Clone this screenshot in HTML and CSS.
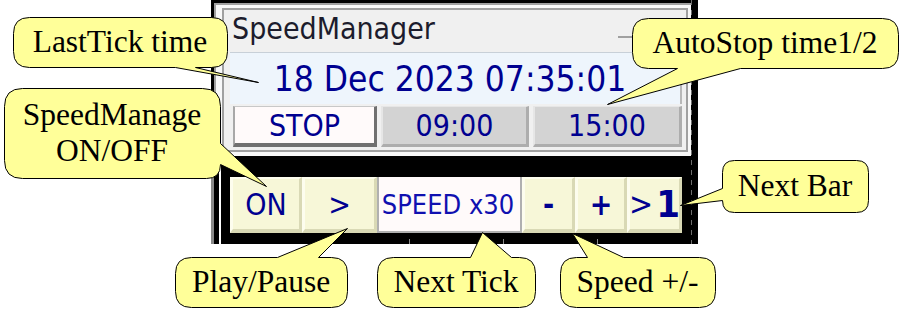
FILE: index.html
```html
<!DOCTYPE html>
<html>
<head>
<meta charset="utf-8">
<link rel="stylesheet" href="styles.css">
</head>
<body>
<div class="stage">
  <div class="chart">
    <div class="panel">
      <div class="panel-inner">
        <div class="title-row"><span class="title">SpeedManager</span><span class="min"></span></div>
        <div class="date">18 Dec 2023 07:35:01</div>
        <div class="boxes">
          <div class="box stop">STOP</div>
          <div class="box time t1">09:00</div>
          <div class="box time t2">15:00</div>
        </div>
      </div>
    </div>
    <div class="controls">
      <div class="row">
        <div class="btn b-on">ON</div>
        <div class="btn b-play">&gt;</div>
        <div class="speed">SPEED x30</div>
        <div class="btn b-minus">-</div>
        <div class="btn b-plus">+</div>
        <div class="btn b-next"><span class="gt">&gt;</span><span class="one">1</span></div>
      </div>
    </div>
  </div>

  <svg class="shapes" width="903" height="313" viewBox="0 0 903 313">
    <path d="M29.5,17.5 H211.5 Q227.5,17.5 227.5,33.5 V51.5 Q227.5,67.5 211.5,67.5 H195.5 L258.5,82.5 L175.5,67.5 H29.5 Q13.5,67.5 13.5,51.5 V33.5 Q13.5,17.5 29.5,17.5 Z"/>
    <path d="M22.5,88.5 H202.5 Q220.5,88.5 220.5,106.5 V143.5 L266.5,186.5 L220.5,164.5 Q220.5,178.5 206.5,178.5 H22.5 Q4.5,178.5 4.5,160.5 V106.5 Q4.5,88.5 22.5,88.5 Z"/>
    <path d="M648.5,18.5 H882.5 Q898.5,18.5 898.5,34.5 V52.5 Q898.5,68.5 882.5,68.5 H740.5 L607.5,104.5 L677.5,68.5 H648.5 Q632.5,68.5 632.5,52.5 V34.5 Q632.5,18.5 648.5,18.5 Z"/>
    <path d="M191.5,257.5 H277.5 L347.5,228.5 L318.5,257.5 H331.5 Q347.5,257.5 347.5,273.5 V291.5 Q347.5,307.5 331.5,307.5 H191.5 Q175.5,307.5 175.5,291.5 V273.5 Q175.5,257.5 191.5,257.5 Z"/>
    <path d="M393.5,257.5 H470.5 L482.5,232.5 L511.5,257.5 H519.5 Q535.5,257.5 535.5,273.5 V291.5 Q535.5,307.5 519.5,307.5 H393.5 Q377.5,307.5 377.5,291.5 V273.5 Q377.5,257.5 393.5,257.5 Z"/>
    <path d="M576.5,257.5 H587.5 L572.5,233.5 L623.5,257.5 H699.5 Q715.5,257.5 715.5,273.5 V291.5 Q715.5,307.5 699.5,307.5 H576.5 Q560.5,307.5 560.5,291.5 V273.5 Q560.5,257.5 576.5,257.5 Z"/>
    <path d="M734.5,160.5 H856.5 Q868.5,160.5 868.5,172.5 V200.5 Q868.5,212.5 856.5,212.5 H734.5 Q722.5,212.5 722.5,200.5 L680.5,205.5 L722.5,188.5 V172.5 Q722.5,160.5 734.5,160.5 Z"/>
  </svg>

  <div class="callout c1">LastTick time</div>
  <div class="callout c2">SpeedManage<br>ON/OFF</div>
  <div class="callout c3">AutoStop time1/2</div>
  <div class="callout c4">Play/Pause</div>
  <div class="callout c5">Next Tick</div>
  <div class="callout c6">Speed +/-</div>
  <div class="callout c7">Next Bar</div>
</div>
</body>
</html>
```
FILE: styles.css
```css
html, body {
  margin: 0;
  padding: 0;
  background: #ffffff;
}

body {
  width: 903px;
  height: 313px;
  overflow: hidden;
  font-family: "DejaVu Sans Condensed", "DejaVu Sans", sans-serif;
  font-stretch: condensed;
}

.stage {
  position: relative;
  width: 903px;
  height: 313px;
}

/* chart window */
.chart {
  margin-left: 211px;
  width: 487px;
  height: 244px;
  box-sizing: border-box;
  padding: 3px 0 0 3px;
  background-color: #000000;
  background-image: repeating-linear-gradient(to bottom, #6e6e6e 0 5px, transparent 5px 10px);
  background-size: 1px 100%;
  background-position: 480px 0;
  background-repeat: no-repeat;
}

/* dialog panel */
.panel {
  width: 477px;
  height: 153px;
  box-sizing: border-box;
  border-left: 2px solid #a0a0a0;
  border-top: 2px solid #a0a0a0;
  padding: 3px 3px 4px 6px;
  background: #f8f8f8;
}

.panel-inner {
  height: 100%;
  box-sizing: border-box;
  border: 2px solid #a0a0a0;
  background: #f0f0f0;
  display: flex;
  flex-direction: column;
}

.title-row {
  height: 42px;
  flex: none;
  display: flex;
  justify-content: space-between;
  align-items: flex-start;
  padding-left: 8px;
}

.title {
  font-size: 30px;
  line-height: 36px;
  padding-top: 1px;
  color: #1c1c2c;
}

.min {
  width: 14px;
  height: 2px;
  background: #a0a0a0;
  margin-top: 26px;
  margin-right: 54px;
}

.date {
  height: 52px;
  flex: none;
  box-sizing: border-box;
  margin: 0 4px 0 6px;
  border-top: 1px solid #c8d0d8;
  border-right: 2px solid #b8b8b8;
  background: #eef5fc;
  display: flex;
  align-items: center;
  justify-content: center;
  padding-right: 10px;
  font-size: 35px;
  white-space: nowrap;
  color: #000090;
}

.boxes {
  display: flex;
  gap: 4px;
  margin-top: 2px;
  padding-left: 9px;
  height: 41px;
  flex: none;
}

.box {
  box-sizing: border-box;
  height: 41px;
  display: flex;
  align-items: center;
  justify-content: center;
  font-size: 30px;
  color: #000090;
}

.stop {
  width: 144px;
  background: #fffafa;
  border-left: 2px solid #a8a8a8;
  border-top: 1px solid #c8c8c8;
  border-right: 3px solid #707070;
  border-bottom: 4px solid #707070;
}

.time {
  background: #d3d3d3;
  border-left: 2px solid #e6e6e6;
  border-top: 1px solid #e6e6e6;
  border-right: 3px solid #adadad;
  border-bottom: 3px solid #adadad;
}

.t1 { width: 148px; }
.t2 { width: 149px; }

/* control buttons on chart */
.controls {
  margin-left: -3px;
  border-left: 3px solid #8a8a8a;
  height: 88px;
  box-sizing: border-box;
  padding: 21px 0 0 16px;
  background-image:
    linear-gradient(#ffffff, #ffffff),
    linear-gradient(#8a8a8a, #8a8a8a),
    linear-gradient(#8a8a8a, #8a8a8a),
    linear-gradient(#8a8a8a, #8a8a8a);
  background-size: 2px 100%, 1px 5px, 1px 5px, 1px 5px;
  background-position: 5px 0, 195px 100%, 289px 100%, 383px 100%;
  background-repeat: no-repeat;
}

.row {
  display: flex;
  height: 56px;
}

.btn {
  box-sizing: border-box;
  height: 56px;
  background: #f7f7d8;
  border-style: solid;
  border-width: 2px 3px 4px 3px;
  border-color: #fdfdee #d9d9b5 #d9d9b5 #fdfdee;
  display: flex;
  align-items: center;
  justify-content: center;
  font-size: 30px;
  white-space: nowrap;
  color: #000090;
}

.b-on { width: 72px; }
.b-play { width: 75px; }
.b-minus { width: 53px; font-weight: bold; }
.b-plus { width: 52px; font-weight: bold; }
.b-next { width: 55px; }

.gt {
  font-size: 32px;
}

.one {
  font-size: 38px;
  font-weight: bold;
  margin-left: 3px;
}

.speed {
  width: 145px;
  height: 56px;
  box-sizing: border-box;
  background: #fffafa;
  border: 2px solid #b0b0b0;
  border-top: 0;
  display: flex;
  align-items: center;
  justify-content: center;
  padding-right: 3px;
  font-size: 27px;
  white-space: nowrap;
  color: #1010b0;
}

/* callouts overlay */
.shapes {
  position: absolute;
  left: 0;
  top: 0;
  fill: #ffff99;
  stroke: #000000;
  stroke-width: 1;
}

.callout {
  position: absolute;
  display: flex;
  align-items: center;
  justify-content: center;
  text-align: center;
  font-family: "Liberation Serif", "Times New Roman", serif;
  font-size: 31.5px;
  line-height: 36px;
  color: #000000;
}

.c1 { left: 13px; top: 17px; width: 214px; height: 50px; }
.c2 { left: 4px; top: 88px; width: 216px; height: 90px; }
.c3 { left: 632px; top: 18px; width: 266px; height: 50px; }
.c4 { left: 175px; top: 257px; width: 172px; height: 50px; }
.c5 { left: 377px; top: 257px; width: 158px; height: 50px; }
.c6 { left: 560px; top: 257px; width: 155px; height: 50px; }
.c7 { left: 722px; top: 160px; width: 146px; height: 52px; }
```
